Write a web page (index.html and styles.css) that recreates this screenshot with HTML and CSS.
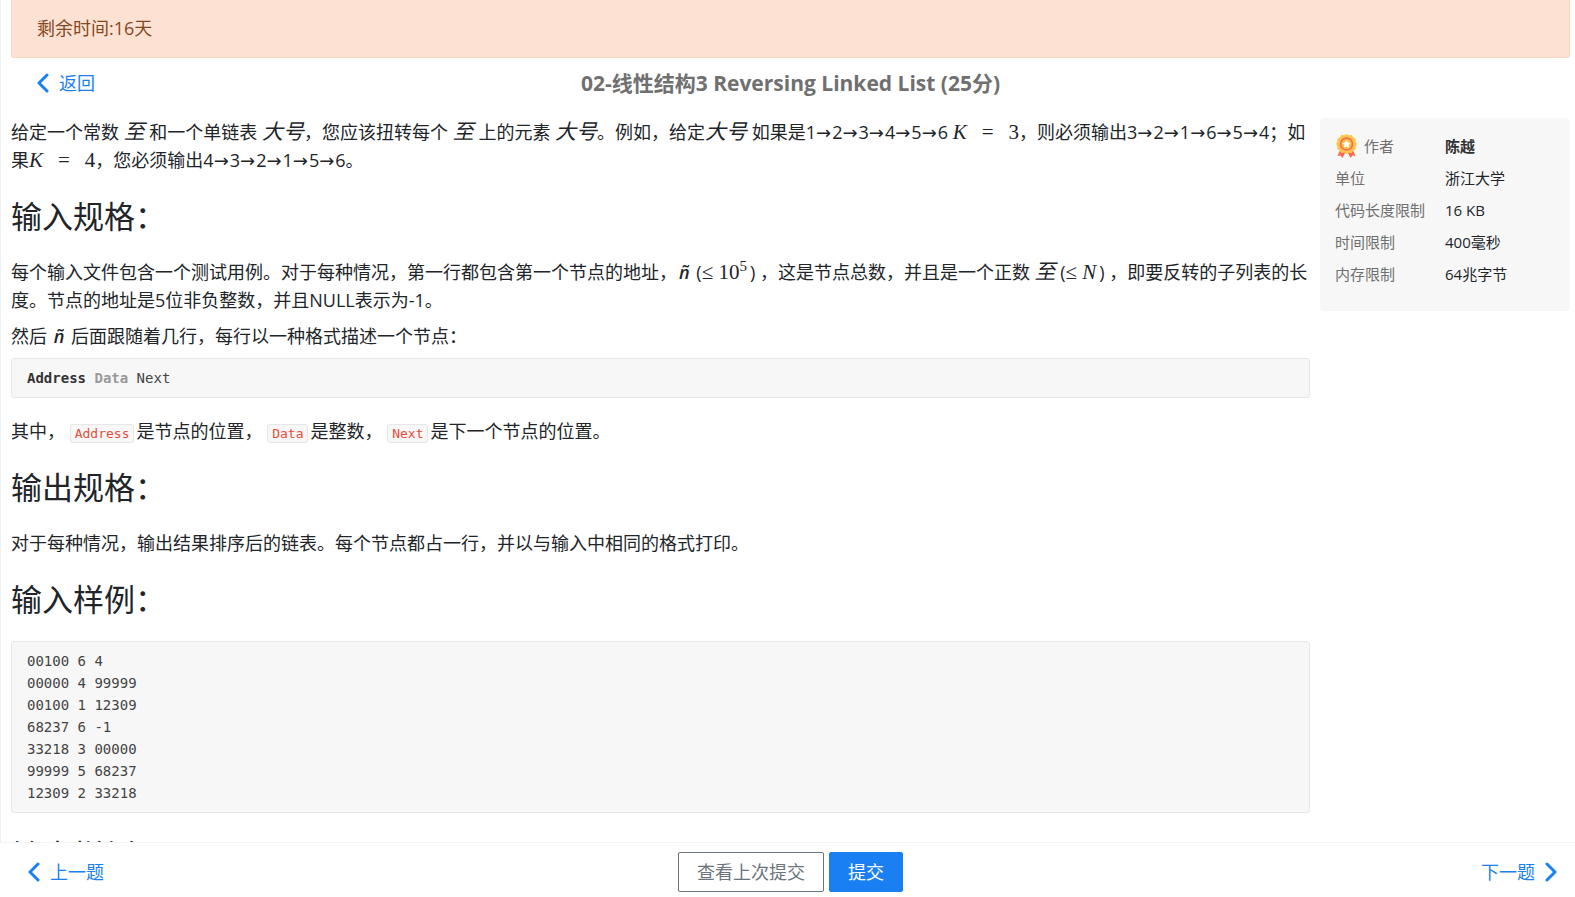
FILE: index.html
```html
<!DOCTYPE html>
<html lang="zh-CN">
<head>
<meta charset="utf-8">
<title>02-线性结构3 Reversing Linked List</title>
<link rel="stylesheet" href="styles.css">
</head>
<body>
<div class="page">
  <main class="scroll">
    <div class="notice" role="status">剩余时间:16天</div>
    <header class="head">
      <a class="nav-link" href="#"><svg class="chevron" viewBox="0 0 12 20" aria-hidden="true"><path d="M10 2 2 10l8 8"/></svg>返回</a>
      <h1 class="title">02-线性结构3 Reversing Linked List (25分)</h1>
      <span></span>
    </header>
    <div class="columns">
      <article class="problem">
        <p>给定一个常数 <i class="cjk">至</i> 和一个单链表 <i class="cjk">大号</i>，您应该扭转每个 <i class="cjk">至</i> 上的元素 <i class="cjk">大号</i>。例如，给定<i class="cjk">大号</i> 如果是1<b class="to">→</b>2<b class="to">→</b>3<b class="to">→</b>4<b class="to">→</b>5<b class="to">→</b>6 <span class="math"><i>K</i><span class="rel">=</span>3</span>，则必须输出3<b class="to">→</b>2<b class="to">→</b>1<b class="to">→</b>6<b class="to">→</b>5<b class="to">→</b>4；如果<span class="math"><i>K</i><span class="rel">=</span>4</span>，您必须输出4<b class="to">→</b>3<b class="to">→</b>2<b class="to">→</b>1<b class="to">→</b>5<b class="to">→</b>6。</p>
        <h2>输入规格：</h2>
        <p>每个输入文件包含一个测试用例。对于每种情况，第一行都包含第一个节点的地址，<i class="var">ñ</i> (<span class="math group">≤ 10<sup>5</sup></span>) ，这是节点总数，并且是一个正数 <i class="cjk">至</i> (<span class="math group">≤ <i>N</i></span>) ，即要反转的子列表的长度。节点的地址是5位非负整数，并且NULL表示为-1。</p>
        <p>然后 <i class="var">ñ</i> 后面跟随着几行，每行以一种格式描述一个节点：</p>
        <pre><code><b class="key">Address</b> <b class="muted">Data</b> Next</code></pre>
        <p>其中， <code class="tag">Address</code>是节点的位置， <code class="tag">Data</code>是整数， <code class="tag">Next</code>是下一个节点的位置。</p>
        <h2>输出规格：</h2>
        <p>对于每种情况，输出结果排序后的链表。每个节点都占一行，并以与输入中相同的格式打印。</p>
        <h2>输入样例：</h2>
        <pre><code>00100 6 4
00000 4 99999
00100 1 12309
68237 6 -1
33218 3 00000
99999 5 68237
12309 2 33218</code></pre>
        <h2>输出样例：</h2>
      </article>
      <aside class="info">
        <dl>
          <dt><svg class="medal" viewBox="0 0 22 26" aria-hidden="true"><path d="M5 16 2 23l3-.5L7 25l3-6zM17 16l3 7-3-.5-2 2.500-3-6z" fill="#fb6a4d"/><path d="m11 1 2.500 1.300 2.800-.3 1.400 2.500 2.600 1.300-.2 2.800L21.500 11l-1.400 2.400.2 2.800-2.600 1.300-1.400 2.500-2.800-.3L11 21l-2.500-1.300-2.800.3-1.400-2.500-2.600-1.300.2-2.800L.5 11l1.400-2.400-.2-2.800 2.600-1.300L5.700 2l2.800.3z" fill="#fdc64f"/><circle cx="11" cy="11" r="6" fill="#fdbb4a" stroke="#fb6a4d" stroke-width="1.600"/><path d="m11 6.800 1.300 2.700 3 .4-2.200 2 .6 2.900-2.700-1.400-2.700 1.400.6-2.900-2.200-2 3-.4z" fill="#fff"/></svg>作者</dt><dd class="author">陈越</dd>
          <dt>单位</dt><dd>浙江大学</dd>
          <dt>代码长度限制</dt><dd>16 KB</dd>
          <dt>时间限制</dt><dd>400毫秒</dd>
          <dt>内存限制</dt><dd>64兆字节</dd>
        </dl>
      </aside>
    </div>
  </main>
  <footer class="foot">
    <a class="nav-link" href="#"><svg class="chevron" viewBox="0 0 12 20" aria-hidden="true"><path d="M10 2 2 10l8 8"/></svg>上一题</a>
    <div class="actions">
      <button class="btn outline" type="button">查看上次提交</button>
      <button class="btn primary" type="button">提交</button>
    </div>
    <a class="nav-link next" href="#">下一题<svg class="chevron" viewBox="0 0 12 20" aria-hidden="true"><path d="m2 2 8 8-8 8"/></svg></a>
  </footer>
</div>
</body>
</html>
```
FILE: styles.css
```css
* { box-sizing: border-box; }
body {
  margin: 0;
  font-family: "Open Sans", "Noto Sans CJK SC", sans-serif;
  font-size: 18px;
  line-height: 28px;
  color: #212529;
  background: #fff;
}
.page {
  display: flex;
  flex-direction: column;
  height: 100vh;
}
.scroll {
  flex: 1;
  min-height: 0;
  overflow: hidden;
  padding: 0 5px 0 10px;
  border-left: 1px solid #edf2f7;
}
.notice {
  padding: 14px 25px 15px;
  border: 1px solid #fcd6c2;
  border-top: 0;
  border-radius: 0 0 3px 3px;
  background: #fde2d3;
  color: #84481f;
}
.head {
  display: grid;
  grid-template-columns: 1fr auto 1fr;
  align-items: center;
  padding: 0 26px;
  height: 50px;
}
.nav-link {
  display: flex;
  align-items: center;
  gap: 10px;
  color: #1a7ff3;
  text-decoration: none;
}
.chevron {
  width: 12px;
  height: 20px;
  fill: none;
  stroke: #1a7ff3;
  stroke-width: 3;
  stroke-linecap: round;
  stroke-linejoin: round;
}
.title {
  margin: 0;
  font-size: 21px;
  font-weight: 700;
  color: #707070;
}
.columns {
  display: flex;
  align-items: flex-start;
  gap: 10px;
  padding-top: 10px;
}
.problem {
  flex: 1;
  min-width: 0;
}
.problem p { margin: 0 0 8px; }
.problem h2 {
  margin: 19px 0;
  font-size: 31px;
  font-weight: 400;
  line-height: 46px;
}
.problem i, .math, .to { line-height: 1; }
.cjk { font-size: 21px; }
.var {
  font-size: 18px;
  font-weight: 600;
  padding: 0 2px;
}
.math {
  font-family: "Liberation Serif", serif;
  font-size: 21px;
  white-space: nowrap;
}
.math sup {
  font-size: 15px;
  line-height: 1;
}
.group { padding-right: 3px; }
.rel { padding: 0 15px; }
.to {
  padding-right: 1px;
  font-family: "DejaVu Sans", sans-serif;
  font-weight: 400;
}
pre, .tag {
  font-family: "DejaVu Sans Mono", monospace;
  font-size: 14px;
  border: 1px solid #e7e7e7;
  border-radius: 3px;
  background: #f7f7f7;
}
pre {
  margin: 0 0 19px;
  padding: 8px 15px;
  line-height: 22px;
  color: #444;
}
pre code { font: inherit; }
.key { color: #333; }
.muted { color: #999; }
.tag {
  padding: 1px 4px;
  margin-right: 2px;
  font-size: 13px;
  line-height: 1;
  color: #e74c3c;
}
.info {
  width: 250px;
  padding: 11px 15px 21px;
  border-radius: 4px;
  background: #f7f7f7;
  font-size: 15px;
}
.info dl {
  display: grid;
  grid-template-columns: 110px 1fr;
  grid-template-rows: 33px;
  grid-auto-rows: 32px;
  align-items: center;
  margin: 0;
}
.info dt {
  display: flex;
  align-items: center;
  gap: 6px;
  color: #707070;
}
.info dd { margin: 0; }
.info .author { font-weight: 700; color: #333; }
.medal {
  width: 23px;
  height: 26px;
}
.foot {
  display: grid;
  grid-template-columns: 1fr auto 1fr;
  align-items: center;
  height: 55px;
  padding: 4px 18px 0 28px;
  border-top: 1px solid #f5f5f5;
  background: #fff;
}
.actions {
  display: flex;
  gap: 5px;
  margin-right: 4px;
}
.next { justify-self: end; }
.btn {
  height: 40px;
  padding: 0 18px;
  border: 1px solid #6c757d;
  border-radius: 2px;
  font: inherit;
  background: #fff;
  color: #6c757d;
}
.btn.primary {
  border-color: #1a7ff3;
  background: #1a7ff3;
  color: #fff;
}
```
